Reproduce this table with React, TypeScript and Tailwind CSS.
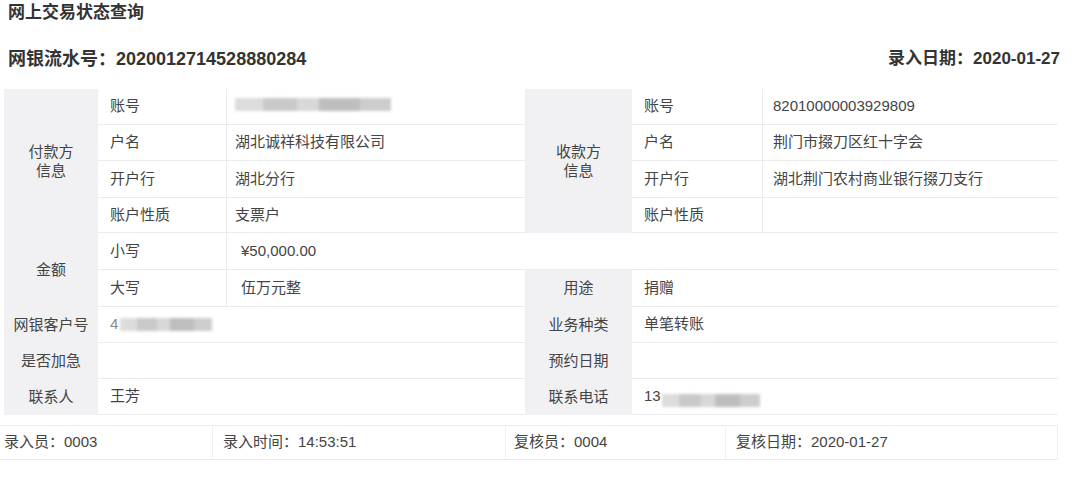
import React from 'react';

const font = { fontFamily: '"Liberation Sans", "Noto Sans CJK SC", sans-serif' };

// gray label cell (group titles and right-side labels)
function G({ className = '', children }: { className?: string; children?: React.ReactNode }) {
  return (
    <div className={`bg-[#f1f1f3] flex items-center justify-center text-center text-[#444] ${className}`}>
      {children}
    </div>
  );
}

// white cell with bottom rule
function W({ className = '', children }: { className?: string; children?: React.ReactNode }) {
  return (
    <div className={`bg-white border-b border-[#ececee] flex items-center text-[#444] ${className}`}>
      {children}
    </div>
  );
}

function Blur({ className = '' }: { className?: string }) {
  return (
    <span className={`inline-flex h-[13px] blur-[1.5px] ${className}`}>
      <span className="w-[18%] bg-[#dcdcdc]" />
      <span className="w-[22%] bg-[#c9c9c9]" />
      <span className="w-[14%] bg-[#d8d8d8]" />
      <span className="w-[26%] bg-[#bebebe]" />
      <span className="w-[20%] bg-[#cdcdcd]" />
    </span>
  );
}

export default function App() {
  return (
    <main className="w-[1080px] h-[489px] bg-white overflow-hidden pt-px" style={font}>
      <h1 className="px-2 h-6 leading-6 text-[17px] font-bold text-[#333]">网上交易状态查询</h1>

      <div className="mt-[22px] pl-2 pr-5 h-6 flex items-center justify-between text-[18px] font-bold text-[#333]">
        <span>网银流水号：2020012714528880284</span>
        <span className="text-[17px]">录入日期：2020-01-27</span>
      </div>

      {/* detail grid */}
      <div className="mt-[18px] ml-1 w-[1054px] grid grid-cols-[94px_128px_299px_107px_130px_296px] grid-rows-[36px_36px_37px_35px_37px_37px_36px_36px_36px] text-[15px] border-r border-[#ececee]">
        <G className="col-start-1 row-start-1 row-span-4 leading-[19px]">付款方<br />信息</G>
        <W className="col-start-2 row-start-1 pl-3">账号</W>
        <W className="col-start-3 row-start-1 pl-2 border-l"><Blur className="w-[156px] -mt-1" /></W>
        <W className="col-start-2 row-start-2 pl-3">户名</W>
        <W className="col-start-3 row-start-2 pl-2 border-l">湖北诚祥科技有限公司</W>
        <W className="col-start-2 row-start-3 pl-3">开户行</W>
        <W className="col-start-3 row-start-3 pl-2 border-l">湖北分行</W>
        <W className="col-start-2 row-start-4 pl-3">账户性质</W>
        <W className="col-start-3 row-start-4 pl-2 border-l">支票户</W>

        <G className="col-start-4 row-start-1 row-span-4 leading-[19px]">收款方<br />信息</G>
        <W className="col-start-5 row-start-1 pl-3">账号</W>
        <W className="col-start-6 row-start-1 pl-[10px] border-l">82010000003929809</W>
        <W className="col-start-5 row-start-2 pl-3">户名</W>
        <W className="col-start-6 row-start-2 pl-[10px] border-l">荆门市掇刀区红十字会</W>
        <W className="col-start-5 row-start-3 pl-3">开户行</W>
        <W className="col-start-6 row-start-3 pl-[10px] border-l">湖北荆门农村商业银行掇刀支行</W>
        <W className="col-start-5 row-start-4 pl-3">账户性质</W>
        <W className="col-start-6 row-start-4 border-l" />

        <G className="col-start-1 row-start-5 row-span-2">金额</G>
        <W className="col-start-2 row-start-5 pl-3">小写</W>
        <W className="col-start-3 col-span-4 row-start-5 pl-[14px] border-l">¥50,000.00</W>
        <W className="col-start-2 row-start-6 pl-3">大写</W>
        <W className="col-start-3 row-start-6 pl-[14px] border-l">伍万元整</W>
        <G className="col-start-4 row-start-6">用途</G>
        <W className="col-start-5 col-span-2 row-start-6 pl-3">捐赠</W>

        <G className="col-start-1 row-start-7">网银客户号</G>
        <W className="col-start-2 col-span-2 row-start-7 pl-3">
          <span className="text-[#888]">4</span>
          <Blur className="w-[92px] ml-[2px]" />
        </W>
        <G className="col-start-4 row-start-7">业务种类</G>
        <W className="col-start-5 col-span-2 row-start-7 pl-3">单笔转账</W>

        <G className="col-start-1 row-start-8">是否加急</G>
        <W className="col-start-2 col-span-2 row-start-8" />
        <G className="col-start-4 row-start-8">预约日期</G>
        <W className="col-start-5 col-span-2 row-start-8" />

        <G className="col-start-1 row-start-9">联系人</G>
        <W className="col-start-2 col-span-2 row-start-9 pl-3">王芳</W>
        <G className="col-start-4 row-start-9">联系电话</G>
        <W className="col-start-5 col-span-2 row-start-9 pl-3">
          13<Blur className="w-[98px] ml-[1px] mt-2" />
        </W>
      </div>

      {/* footer */}
      <div className="mt-[10px] w-[1058px] h-[35px] grid grid-cols-[212px_293px_220px_333px] border-y border-[#ececee] text-[15px] text-[#444]">
        <div className="flex items-center pl-1">录入员：0003</div>
        <div className="flex items-center pl-[10px] border-l border-[#f1f1f1]">录入时间：14:53:51</div>
        <div className="flex items-center pl-2 border-l border-[#f1f1f1]">复核员：0004</div>
        <div className="flex items-center pl-[10px] border-l border-r border-[#f1f1f1]">复核日期：2020-01-27</div>
      </div>
    </main>
  );
}
